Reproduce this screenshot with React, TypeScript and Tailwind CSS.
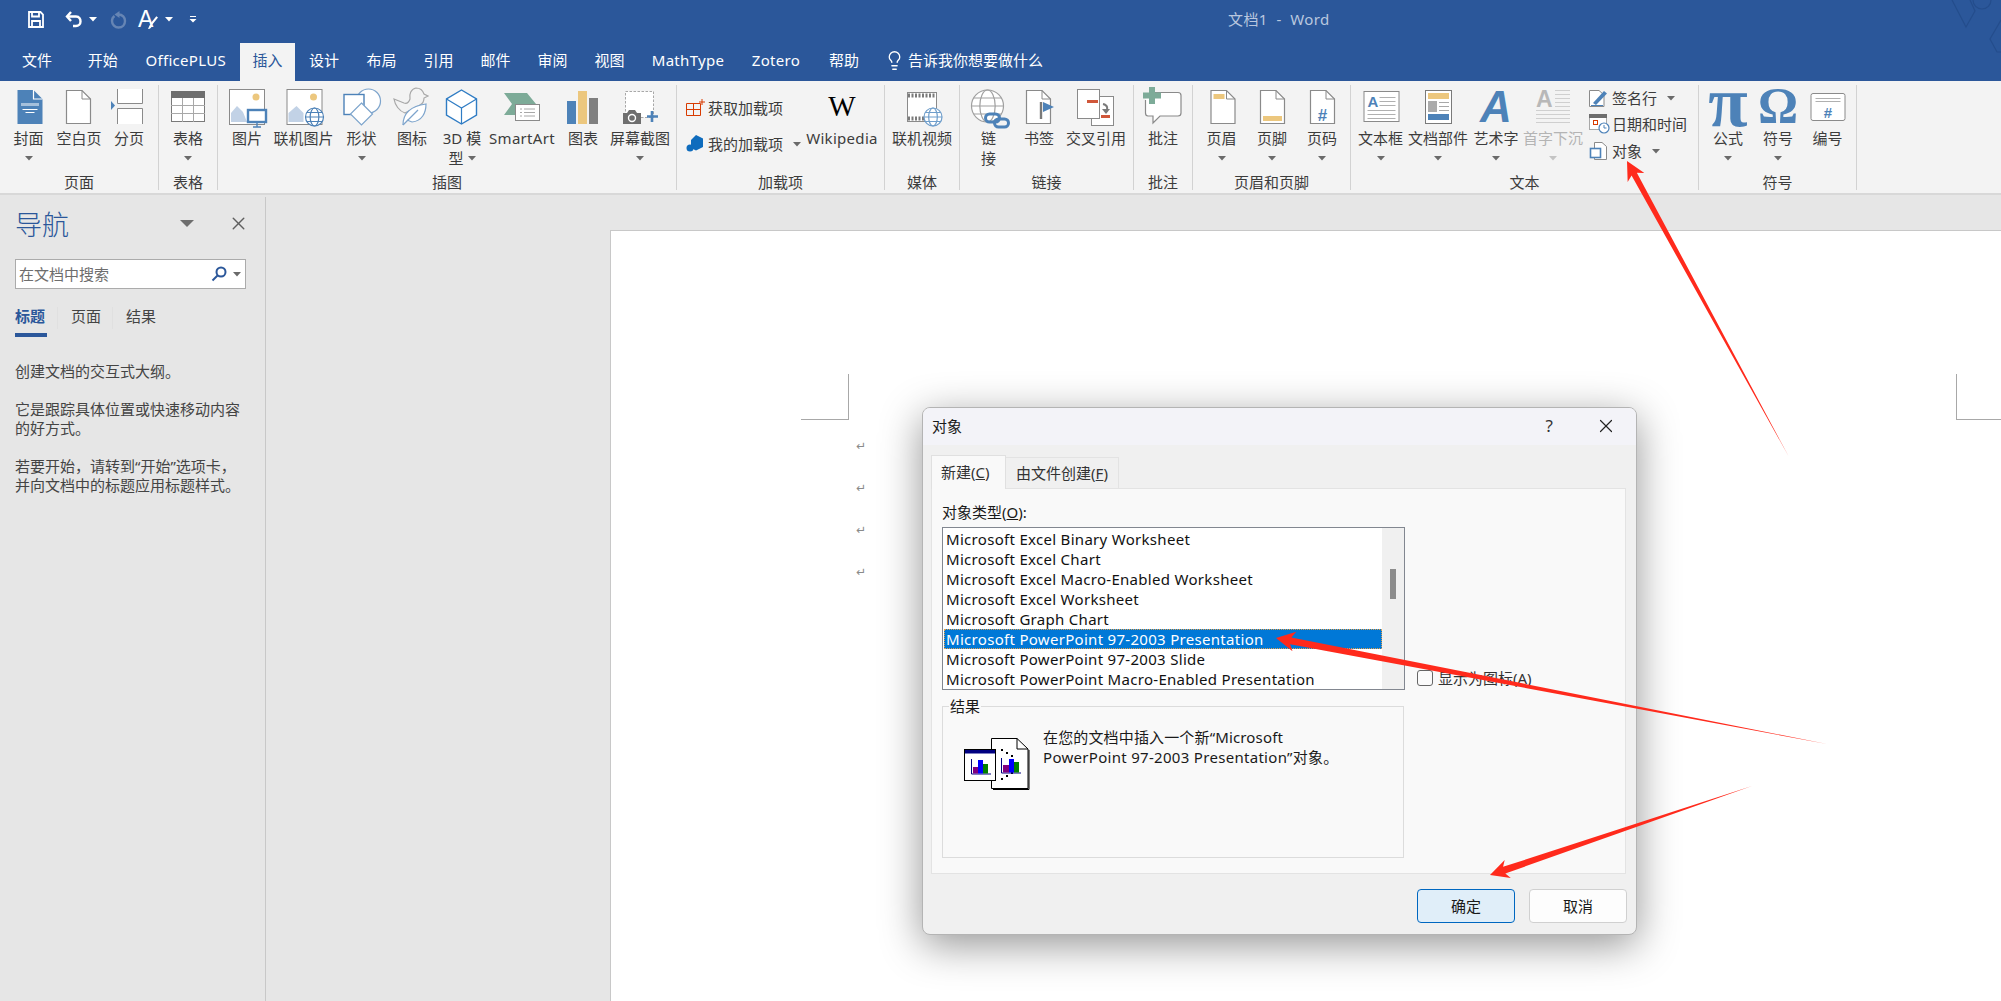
import React from "react";
import { Lightbulb, X } from "lucide-react";

const blue = "#4d82b8";
const gray = "#8a8a8a";
const gold = "#ecc77e";
const green = "#7dab98";
const red = "#d0573a";

const Caret = ({ color = "#6a6a6a" }: { color?: string }) => (
  <svg width="8" height="5" viewBox="0 0 8 5" className="shrink-0">
    <path d="M0 0H8L4 4.5Z" fill={color} />
  </svg>
);

// icon box in page coordinates, so shapes can be drawn where they sit in the ribbon
const Ic = ({ cx, children }: { cx: number; children: React.ReactNode }) => (
  <svg width="40" height="35" viewBox={`${cx - 20} 89 40 35`} className="shrink-0 overflow-visible">
    {children}
  </svg>
);

const Sm = ({ x, y, w, h, children }: { x: number; y: number; w: number; h: number; children: React.ReactNode }) => (
  <svg width={w} height={h} viewBox={`${x} ${y} ${w} ${h}`} className="shrink-0 overflow-visible">
    {children}
  </svg>
);

const Page = ({ x, y = 90, w = 25, h = 34 }: { x: number; y?: number; w?: number; h?: number }) => (
  <>
    <path
      d={`M${x + 0.5} ${y + 0.5}H${x + w - 9}L${x + w - 0.5} ${y + 9}V${y + h - 0.5}H${x + 0.5}Z`}
      fill="#fff"
      stroke={gray}
      strokeWidth="1.2"
    />
    <path d={`M${x + w - 9} ${y + 0.5}V${y + 9}H${x + w - 0.5}`} fill="none" stroke={gray} />
  </>
);

const Globe = ({ cx, cy, r, color }: { cx: number; cy: number; r: number; color: string }) => (
  <g fill="#fff" stroke={color} strokeWidth="1.2">
    <circle cx={cx} cy={cy} r={r} />
    <ellipse cx={cx} cy={cy} rx={r * 0.48} ry={r} fill="none" />
    <path d={`M${cx - r} ${cy}H${cx + r}M${cx - r * 0.85} ${cy - r * 0.5}H${cx + r * 0.85}M${cx - r * 0.85} ${cy + r * 0.5}H${cx + r * 0.85}`} fill="none" />
  </g>
);

const Item = ({
  w,
  icon,
  label,
  line2,
  caret,
  muted,
}: {
  w: number;
  icon: React.ReactNode;
  label: string;
  line2?: string;
  caret?: boolean;
  muted?: boolean;
}) => (
  <div
    className={`flex flex-col items-center shrink-0 pt-[4px] text-[15px] leading-[20px] whitespace-nowrap ${
      muted ? "text-[#b4b4b4]" : "text-[#3c3c3c]"
    }`}
    style={{ width: w }}
  >
    {icon}
    <div className={`mt-[4px] h-[20px] ${/[a-z]/.test(label) ? "tracking-[0.3px]" : ""}`}>{label}</div>
    <div className="h-[20px] flex items-center gap-[4px]">
      {line2 && <span>{line2}</span>}
      {caret && <Caret color={muted ? "#c4c4c4" : "#6a6a6a"} />}
    </div>
  </div>
);

const Group = ({ w, pl = 0, label, children }: { w: number; pl?: number; label: string; children: React.ReactNode }) => (
  <div className="h-[105px] flex flex-col shrink-0 border-r border-[#d2d2d2]" style={{ width: w }}>
    <div className="flex-1 flex" style={{ paddingLeft: pl }}>
      {children}
    </div>
    <div className="h-[14px] leading-[12px] text-center text-[15px] text-[#3c3c3c]">{label}</div>
  </div>
);

const tabs = [
  { t: "文件", w: 74 },
  { t: "开始", w: 57.5 },
  { t: "OfficePLUS", w: 108.5 },
  { t: "插入", w: 55, active: true },
  { t: "设计", w: 58 },
  { t: "布局", w: 57 },
  { t: "引用", w: 57 },
  { t: "邮件", w: 57 },
  { t: "审阅", w: 57 },
  { t: "视图", w: 57 },
  { t: "MathType", w: 100 },
  { t: "Zotero", w: 76 },
  { t: "帮助", w: 60 },
];

const TitleBar = () => (
  <div className="relative bg-[#2b579a] h-[81px] text-white overflow-hidden">
    <div className="h-[43px]">
      <div className="h-[38px] flex items-center">
        <div className="w-[1228px] shrink-0 pl-[28px] flex items-center">
          <svg width="16" height="17" viewBox="0 0 16 17" fill="none" stroke="#fff" strokeWidth="1.8">
            <path d="M1 1H12.5L15 3.5V16H1Z" />
            <path d="M4 1V5.5H11V1" />
            <path d="M4 16V10H12V16" />
          </svg>
          <svg width="18" height="18" viewBox="0 0 18 18" fill="none" stroke="#fff" strokeWidth="2.4" className="ml-[21px]">
            <path d="M6 2L2 6.5L6 11" />
            <path d="M2 6.5H11C14.5 6.5 15.5 9.5 15.5 11.5C15.5 14 13.5 16 11 16H8" />
          </svg>
          <span className="ml-[6px]">
            <Caret color="#fff" />
          </span>
          <svg width="17" height="19" viewBox="0 0 17 19" className="ml-[13px]">
            <path d="M9.500 1L4.500 4.500L9.500 8Z" fill="#6685b4" />
            <path d="M8.500 4.500C12.500 4.500 15 7.500 15 11C15 14.500 12.500 17.500 8.500 17.500C5 17.500 2 14.500 2 11C2 9 3 7 4.500 6" fill="none" stroke="#6685b4" strokeWidth="2.400" />
          </svg>
          <span className="ml-[11px] w-[24px] h-[24px] relative block">
            <span className="block text-[23px] leading-[24px] font-['Liberation_Sans',sans-serif]">A</span>
            <svg width="10" height="14" viewBox="0 0 12 16" className="absolute left-[10px] top-[9px]">
              <path d="M10 0L12 1.5L5 10L3 8.5Z M3 9.5L5 11C4 14 2 15.5 0 15C1 13.500 1.500 11 3 9.500Z" fill="#fff" />
            </svg>
          </span>
          <span className="ml-[3px]">
            <Caret color="#fff" />
          </span>
          <svg width="8" height="8" viewBox="0 0 8 8" className="ml-[16px]">
            <path d="M1 1H7V2H1ZM0.5 4H7.5L4 7.5Z" fill="#fff" />
          </svg>
        </div>
        <span className="text-[15px] text-[#b9c7df] tracking-[0.4px] whitespace-pre">文档1  -  Word</span>
      </div>
    </div>
    <div className="h-[38px] flex">
      {tabs.map((tab) => (
        <div
          key={tab.t}
          className={`shrink-0 text-center text-[15px] leading-[34px] ${
            tab.active ? "bg-[#f3f3f3] text-[#2b579a]" : "text-white"
          } ${/[a-z]/.test(tab.t) ? "tracking-[0.3px]" : ""}`}
          style={{ width: tab.w }}
        >
          {tab.t}
        </div>
      ))}
      <div className="flex items-center pl-[10px] pb-[3px] gap-[3px] text-[15px]">
        <Lightbulb size={21} strokeWidth={1.5} />
        <span>告诉我你想要做什么</span>
      </div>
    </div>
    <svg width="60" height="60" viewBox="1941 0 60 60" className="absolute right-0 top-0" fill="none" stroke="#244d8c" strokeWidth="1.2">
      <path d="M1952 0L1966 27L1975 11L1970 0" />
      <circle cx="1982" cy="0" r="9" />
      <path d="M2001 20L1990 39L1997 52H2001" />
    </svg>
  </div>
);

const Ribbon = () => (
  <div className="bg-[#f3f3f3] h-[114px] pt-[4px] border-b-[2px] border-[#d8d8d8] flex">
    <Group w={159} pl={3} label="页面">
      <Item
        w={51}
        label="封面"
        caret
        icon={
          <Ic cx={28.5}>
            <path d="M17 90H33L42 99V124H17Z" fill={blue} />
            <path d="M33 90V99H42" fill="none" stroke="#fff" strokeWidth="1.2" />
            <path d="M21 104.500H38" stroke="#fff" strokeWidth="3" strokeDasharray="1 1" />
            <path d="M22 109.500H37M25 112.500H34" stroke="#fff" strokeWidth="1" />
          </Ic>
        }
      />
      <Item w={50} label="空白页" icon={<Ic cx={79}><Page x={66} /></Ic>} />
      <Item
        w={50}
        label="分页"
        icon={
          <Ic cx={129}>
            <path d="M117.500 89V103.500H142.500V89" fill="#fff" stroke={gray} />
            <path d="M117.500 124V108.500H142.500V124" fill="#fff" stroke={gray} />
            <path d="M111 101L115 105.500L111 110Z" fill={blue} />
          </Ic>
        }
      />
    </Group>
    <Group w={59} label="表格">
      <Item
        w={58}
        label="表格"
        caret
        icon={
          <Ic cx={188}>
            <rect x="171.500" y="91.500" width="33" height="30" fill="#fff" stroke="#7a7a7a" />
            <rect x="171" y="91" width="34" height="7" fill="#6e6e6e" />
            <path d="M182.500 98V122M193.500 98V122M171 105.500H205M171 113.500H205" stroke="#a8a8a8" />
          </Ic>
        }
      />
    </Group>
    <Group w={459} pl={3} label="插图">
      <Item
        w={52}
        label="图片"
        icon={
          <Ic cx={247}>
            <rect x="229.500" y="89.500" width="35" height="35" fill="#fff" stroke={gray} />
            <circle cx="256" cy="97" r="3.500" fill={gold} />
            <path d="M231 122V113L237 106L243 112L247 122Z" fill="#c2d2e6" />
            <rect x="248" y="110" width="18" height="12" fill="#fff" stroke={blue} strokeWidth="2.400" />
            <path d="M257 123V127M253 127H261" stroke={blue} strokeWidth="1.400" />
          </Ic>
        }
      />
      <Item
        w={61}
        label="联机图片"
        icon={
          <Ic cx={303.5}>
            <rect x="286.500" y="89.500" width="35" height="35" fill="#fff" stroke={gray} />
            <circle cx="313" cy="97" r="3.500" fill={gold} />
            <path d="M288 122V113L296 106L303 113V122Z" fill="#c2d2e6" />
            <Globe cx={314} cy={117} r={9} color={blue} />
          </Ic>
        }
      />
      <Item
        w={55}
        label="形状"
        caret
        icon={
          <Ic cx={361.500}>
            <circle cx="368" cy="101" r="12" fill="#fff" stroke="#7da4cc" strokeWidth="1.200" />
            <rect x="343.500" y="94.500" width="20" height="20" fill="#fff" stroke={blue} strokeWidth="1.400" />
            <path d="M361 103L372 114L361 125L350 114Z" fill="#fff" stroke="#7da4cc" strokeWidth="1.200" />
          </Ic>
        }
      />
      <Item
        w={46}
        label="图标"
        icon={
          <Ic cx={412}>
            <path d="M394 99L404 103C407 104 409 102 410 99C409 94 411 89 416 88C421 88 423 91 424 94L428 96L424 98C424 101 422 104 420 105L405 113C399 111 395 105 394 99Z" fill="none" stroke="#a8a8a8" strokeWidth="1.200" />
            <path d="M403 125C403 112 412 106 426 104C426 113 422 121 412 122L407 120" fill="#fff" stroke="#7da4cc" strokeWidth="1.200" />
            <path d="M403 125L418 110" stroke="#7da4cc" strokeWidth="1.200" />
          </Ic>
        }
      />
      <Item
        w={54}
        label="3D 模"
        line2="型"
        caret
        icon={
          <Ic cx={462}>
            <path d="M461.500 90L476.500 99V115L461.500 124L446.500 115V99Z" fill="#fff" stroke="#2f7cc4" strokeWidth="1.400" />
            <path d="M446.500 99L461.500 108L476.500 99M461.500 108V124" fill="none" stroke="#2f7cc4" strokeWidth="1.200" />
          </Ic>
        }
      />
      <Item
        w={66}
        label="SmartArt"
        icon={
          <Ic cx={522}>
            <path d="M504 93H527L536 104V106L527 115H504L512 104Z" fill={green} />
            <rect x="515.500" y="104.500" width="24" height="16" fill="#fff" stroke={gray} />
            <path d="M520 109H522M524 109H535M520 112.500H522M524 112.500H535M520 116H522M524 116H535" stroke="#a8a8a8" />
          </Ic>
        }
      />
      <Item
        w={56}
        label="图表"
        icon={
          <Ic cx={583}>
            <rect x="567" y="101" width="9" height="23" fill={blue} />
            <rect x="578" y="91" width="9" height="33" fill={gold} />
            <rect x="589" y="98" width="9" height="26" fill="#7f7f7f" />
          </Ic>
        }
      />
      <Item
        w={58}
        label="屏幕截图"
        caret
        icon={
          <Ic cx={640}>
            <rect x="625.500" y="91.500" width="28" height="26" fill="#fff" stroke="#a8a8a8" strokeDasharray="2.500 1.500" />
            <path d="M623 113H627L629 110H635L637 113H641V124H623Z" fill="#6e6e6e" />
            <circle cx="632" cy="118" r="3.500" fill="none" stroke="#fff" strokeWidth="1.400" />
            <path d="M652 111V122M647 116.500H658" stroke={blue} strokeWidth="2.600" />
          </Ic>
        }
      />
    </Group>
    <Group w={208} label="加载项">
      <div className="w-[126px] shrink-0 pl-[9px] pt-[10px] text-[15px] leading-[20px] text-[#3c3c3c] whitespace-nowrap">
        <div className="flex items-center h-[26px]">
          <Sm x={686} y={99} w={22} h={18}>
            <path d="M686.500 103.500H700.500V115.500H686.500ZM686.500 109.500H700.500M693.500 103.500V115.500" fill="none" stroke="#d83b01" />
            <path d="M702 99V105M699 102H705" stroke="#d83b01" />
          </Sm>
          <span>获取加载项</span>
        </div>
        <div className="flex items-center h-[26px] mt-[10px]">
          <Sm x={686} y={136} w={22} h={18}>
            <path d="M696 136L703 139.500V148L696 151.500L691 149V141Z" fill="#0f6cbd" />
            <circle cx="690" cy="149" r="3.500" fill="#0f6cbd" />
          </Sm>
          <span>我的加载项</span>
          <span className="ml-[10px]">
            <Caret />
          </span>
        </div>
      </div>
      <Item
        w={78}
        label="Wikipedia"
        icon={
          <div className="h-[35px] leading-[35px] text-[29px] text-black font-['Liberation_Serif',serif]">W</div>
        }
      />
    </Group>
    <Group w={75} label="媒体">
      <Item
        w={74}
        label="联机视频"
        icon={
          <Ic cx={922}>
            <rect x="907.500" y="92.500" width="29" height="29" fill="#fff" stroke={gray} />
            <path d="M908 95.500H936M908 118.500H930" stroke="#7a7a7a" strokeWidth="4" strokeDasharray="2 1.500" />
            <Globe cx={933} cy={117} r={9} color="#6f9ecb" />
          </Ic>
        }
      />
    </Group>
    <Group w={174} label="链接">
      <Item
        w={57}
        label="链"
        line2="接"
        icon={
          <Ic cx={988.500}>
            <Globe cx={987} cy={106} r={16} color="#a0a0a0" />
            <rect x="985" y="114" width="14" height="8" rx="4" fill="none" stroke={blue} strokeWidth="3" />
            <rect x="994" y="119" width="14" height="8" rx="4" fill="none" stroke={blue} strokeWidth="3" />
          </Ic>
        }
      />
      <Item
        w={44}
        label="书签"
        icon={
          <Ic cx={1039}>
            <Page x={1026} />
            <path d="M1041 102V119" stroke="#7a7a7a" strokeWidth="2.400" />
            <path d="M1043 102L1054 107L1043 112Z" fill={blue} />
          </Ic>
        }
      />
      <Item
        w={70}
        label="交叉引用"
        icon={
          <Ic cx={1096}>
            <rect x="1091.500" y="96.500" width="22" height="29" fill="#fff" stroke={gray} />
            <rect x="1077.500" y="89.500" width="22" height="29" fill="#fff" stroke={gray} />
            <rect x="1087" y="100" width="11" height="3" fill={red} />
            <rect x="1101" y="115" width="9" height="3" fill={red} />
            <path d="M1103 104C1108 105 1108 109 1106 112" fill="none" stroke="#7a7a7a" strokeWidth="2" />
            <path d="M1102 109H1110L1106 114Z" fill="#7a7a7a" />
          </Ic>
        }
      />
    </Group>
    <Group w={59} label="批注">
      <Item
        w={58}
        label="批注"
        icon={
          <Ic cx={1163}>
            <path d="M1149 92.500H1178C1180 92.500 1181 93.500 1181 95.500V113C1181 115 1180 116 1178 116H1160L1153 123V116H1148C1146 116 1145.500 115 1145.500 113V100" fill="#fff" stroke={gray} strokeWidth="1.200" />
            <path d="M1152 87V104M1143 95.500H1161" stroke={green} strokeWidth="6" />
          </Ic>
        }
      />
    </Group>
    <Group w={158} pl={3} label="页眉和页脚">
      <Item
        w={51}
        label="页眉"
        caret
        icon={
          <Ic cx={1221.500}>
            <Page x={1210} />
            <rect x="1213" y="94" width="11" height="5" fill={gold} />
          </Ic>
        }
      />
      <Item
        w={50}
        label="页脚"
        caret
        icon={
          <Ic cx={1272}>
            <Page x={1260} />
            <rect x="1263" y="116" width="19" height="5" fill={gold} />
          </Ic>
        }
      />
      <Item
        w={50}
        label="页码"
        caret
        icon={
          <Ic cx={1322}>
            <Page x={1310} />
            <text x="1322.500" y="121" textAnchor="middle" fontSize="17" fontWeight="700" fill={blue} fontFamily="Liberation Sans">#</text>
          </Ic>
        }
      />
    </Group>
    <Group w={348} pl={1} label="文本">
      <Item
        w={57}
        label="文本框"
        caret
        icon={
          <Ic cx={1380.500}>
            <rect x="1363.500" y="91.500" width="35" height="30" fill="#fff" stroke={gray} />
            <text x="1367" y="107" fontSize="15" fontWeight="700" fill={blue} fontFamily="Liberation Sans">A</text>
            <path d="M1379 97.500H1395M1379 101.500H1395M1379 105.500H1395M1367 110.500H1395M1367 114.500H1395M1367 118.500H1395" stroke="#b0b0b0" />
          </Ic>
        }
      />
      <Item
        w={58}
        label="文档部件"
        caret
        icon={
          <Ic cx={1438}>
            <rect x="1425.500" y="90.500" width="26" height="33" fill="#fff" stroke="#7a7a7a" />
            <rect x="1428" y="93" width="21" height="6" fill={gold} />
            <rect x="1428" y="101" width="9" height="11" fill="#ababab" />
            <path d="M1439 102.500H1449M1439 106.500H1449M1439 110.500H1449" stroke="#a8a8a8" />
            <rect x="1428" y="114" width="21" height="6" fill={blue} />
          </Ic>
        }
      />
      <Item
        w={58}
        label="艺术字"
        caret
        icon={
          <div className="h-[35px] leading-[35px] text-[44px] font-bold italic text-[#4d82b8] font-['Liberation_Sans',sans-serif]">A</div>
        }
      />
      <Item
        w={56}
        label="首字下沉"
        caret
        muted
        icon={
          <Ic cx={1553}>
            <text x="1536" y="107" fontSize="23" fontWeight="700" fill="#b8b8b8" fontFamily="Liberation Sans">A</text>
            <path d="M1555 90.500H1570M1555 94.500H1570M1555 98.500H1570M1555 102.500H1570M1555 106.500H1570M1536 110.500H1570M1536 114.500H1570M1536 118.500H1570M1536 122.500H1570" stroke="#cfcfcf" />
          </Ic>
        }
      />
      <div className="shrink-0 pl-[8px] pt-[1px] text-[15px] leading-[20px] text-[#3c3c3c] whitespace-nowrap">
        <div className="flex items-center h-[24px]">
          <Sm x={1590} y={87} w={23} h={20}>
            <path d="M1590.500 89.500H1600L1605 94V105.500H1590.500Z" fill="#fff" stroke={gray} />
            <path d="M1594 102L1605 90L1608 92.500L1597 104Z" fill={blue} />
            <path d="M1592 104.500H1604" stroke={blue} />
          </Sm>
          <span>签名行</span>
          <span className="ml-[10px]"><Caret /></span>
        </div>
        <div className="flex items-center h-[24px] mt-[2px]">
          <Sm x={1589} y={114} w={23} h={20}>
            <rect x="1589.500" y="114.500" width="17" height="15" fill="#fff" stroke="#a8a8a8" />
            <rect x="1589" y="114" width="18" height="4" fill="#6e6e6e" />
            <rect x="1593.500" y="120.500" width="4" height="4" fill="#fff" stroke="#d83b01" />
            <circle cx="1604" cy="128" r="5" fill="#fff" stroke={blue} strokeWidth="1.200" />
            <path d="M1604 125V128H1606.500" fill="none" stroke={blue} />
          </Sm>
          <span>日期和时间</span>
        </div>
        <div className="flex items-center h-[24px] mt-[3px]">
          <Sm x={1589} y={141} w={23} h={20}>
            <path d="M1594.500 142.500H1602L1606.500 146.500V159.500H1594.500Z" fill="#fff" stroke={gray} />
            <rect x="1590.500" y="148.500" width="10" height="9" fill="#fff" stroke={blue} strokeWidth="1.600" />
          </Sm>
          <span>对象</span>
          <span className="ml-[10px]"><Caret /></span>
        </div>
      </div>
    </Group>
    <Group w={158} pl={3} label="符号">
      <Item
        w={52}
        label="公式"
        caret
        icon={
          <div className="h-[35px] leading-[27px] text-[72px] font-bold text-[#4d82b8] font-['Liberation_Serif',serif]">π</div>
        }
      />
      <Item
        w={48}
        label="符号"
        caret
        icon={
          <div className="h-[35px] leading-[33px] text-[50px] font-bold text-[#4d82b8] font-['Liberation_Serif',serif]">Ω</div>
        }
      />
      <Item
        w={51}
        label="编号"
        icon={
          <Ic cx={1827.500}>
            <rect x="1810.500" y="93.500" width="34" height="27" rx="2" fill="#fff" stroke={gray} />
            <path d="M1815 98.500H1840M1815 101.500H1840" stroke="#b0b0b0" />
            <text x="1827.500" y="118" textAnchor="middle" fontSize="15" fontWeight="700" fill={blue} fontFamily="Liberation Sans">#</text>
          </Ic>
        }
      />
    </Group>
  </div>
);

const NavPane = () => (
  <div className="w-[266px] shrink-0 pt-[2px] text-[15px] leading-[19px] text-[#444]">
    <div className="h-full border-r border-[#c8c8c8] pl-[15px] pr-[15px]">
      <div className="flex items-center h-[54px] pt-[2px]">
        <span className="text-[27px] leading-[36px] text-[#2b579a] font-light">导航</span>
        <svg width="14" height="7" viewBox="0 0 14 7" className="ml-[111px] -mt-[4px]">
          <path d="M0 0H14L7 7Z" fill="#6e6e6e" />
        </svg>
        <X size={21} strokeWidth={1.6} className="ml-[34px] -mt-[4px] text-[#5f5f5f]" />
      </div>
      <div className="mt-[8px] h-[30px] w-[231px] bg-white border border-[#ababab] flex items-center pl-[3px] pr-[4px] text-[#6d6d6d]">
        <span className="flex-1">在文档中搜索</span>
        <svg width="16" height="16" viewBox="0 0 16 16" fill="none" stroke="#2b579a" strokeWidth="2">
          <circle cx="10" cy="6" r="4.500" />
          <path d="M6.500 9.500L1.500 14.500" />
        </svg>
        <span className="ml-[6px]">
          <Caret />
        </span>
      </div>
      <div className="mt-[18px] flex">
        <div className="w-[32px]">
          <div className="font-bold text-[#2b579a] h-[20px]">标题</div>
          <div className="mt-[6px] h-[4px] bg-[#2b579a]" />
        </div>
        <div className="ml-[10px] w-px h-[22px] bg-[#e0e0e0]" />
        <div className="ml-[13px] h-[20px]">页面</div>
        <div className="ml-[11px] w-px h-[22px] bg-[#e0e0e0]" />
        <div className="ml-[13px] h-[20px]">结果</div>
      </div>
      <div className="mt-[25px]">创建文档的交互式大纲。</div>
      <div className="mt-[19px]">
        <div>它是跟踪具体位置或快速移动内容</div>
        <div>的好方式。</div>
      </div>
      <div className="mt-[19px]">
        <div>{"若要开始\uFF0C请转到“开始”选项卡\uFF0C"}</div>
        <div>并向文档中的标题应用标题样式。</div>
      </div>
    </div>
  </div>
);

const DocArea = () => (
  <div className="flex-1 pl-[344px] pt-[35px] flex">
    <div className="flex-1 bg-white border-l border-t border-[#c8c8c8]">
      <div className="flex pt-[143px] pl-[190px]">
        <div className="w-[48px] h-[46px] border-r border-b border-[#a8a8a8]" />
        <div className="ml-auto w-[45px] h-[46px] border-l border-b border-[#a8a8a8]" />
      </div>
      <div className="pl-[245px] pt-[5px] text-[12px] leading-[42px] text-[#8a8a8a] font-['DejaVu_Sans',sans-serif]">
        <div>↵</div>
        <div>↵</div>
        <div>↵</div>
        <div>↵</div>
      </div>
    </div>
  </div>
);

const objectTypes = [
  "Microsoft Excel Binary Worksheet",
  "Microsoft Excel Chart",
  "Microsoft Excel Macro-Enabled Worksheet",
  "Microsoft Excel Worksheet",
  "Microsoft Graph Chart",
  "Microsoft PowerPoint 97-2003 Presentation",
  "Microsoft PowerPoint 97-2003 Slide",
  "Microsoft PowerPoint Macro-Enabled Presentation",
];

const ResultIcon = () => (
  <svg width="66" height="52" viewBox="0 0 66 52" className="shrink-0 mt-[11px]">
    <path d="M27.500 0.500H53L64 11V50.500H27.500Z" fill="#fff" stroke="#000" />
    <path d="M53 0.500V11H64" fill="none" stroke="#000" />
    <path d="M29 51.500H65V12" fill="none" stroke="#000" />
    <path d="M37 12h2M42 15h2M47 18h2M37 41h2M42 38h2M47 35h2" stroke="#000" strokeWidth="2" />
    <rect x="0.500" y="11.500" width="31" height="31" fill="#fff" stroke="#000" />
    <rect x="1" y="12" width="30" height="3.500" fill="#000080" />
    <path d="M7.500 21V36H27M37.500 20V35H57" fill="none" stroke="#000080" />
    <rect x="9" y="29" width="5" height="6.500" fill="#800080" />
    <rect x="14" y="22" width="5" height="13.500" fill="#0000ff" />
    <rect x="19" y="26" width="5" height="9.500" fill="#008000" />
    <rect x="39" y="27" width="6" height="7.500" fill="#800080" />
    <rect x="45" y="21" width="5" height="13.500" fill="#0000ff" />
    <rect x="50" y="24" width="5" height="10.500" fill="#008000" />
  </svg>
);

const ObjectDialog = () => (
  <div className="absolute left-[922px] top-[407px] w-[715px] h-[528px] rounded-[8px] border border-[#b4b4b4] bg-[#f0f0f0] shadow-[0_10px_42px_rgba(0,0,0,0.42)] text-[15px] leading-[20px] text-[#1a1a1a] overflow-hidden">
    <div className="h-[37px] bg-[#f3f3f8] flex items-center pl-[9px] pb-[2px]">
      <span className="flex-1">对象</span>
      <span className="text-[17px] text-[#333] mr-[42px]">?</span>
      <X size={22} strokeWidth={1.3} className="mr-[19px] text-[#222]" />
    </div>
    <div className="h-[43px] pl-[8px] flex items-end">
      <div className="w-[75px] h-[34px] -mb-px relative bg-[#f9f9f9] border-l border-t border-r border-[#e0e0e0] pl-[9px] pb-px flex items-center text-[#333]">
        <span>
          新建(<u>C</u>)
        </span>
      </div>
      <div className="w-[113px] h-[31px] border-t border-r border-[#e3e3e3] flex items-center justify-center text-[#333]">
        <span>
          由文件创建(<u>F</u>)
        </span>
      </div>
    </div>
    <div className="ml-[8px] w-[695px] h-[386px] bg-[#f9f9f9] border border-[#e3e3e3] pl-[10px] pt-[13px]">
      <div className="h-[20px]">
        对象类型(<u>O</u>):
      </div>
      <div className="mt-[5px] flex">
        <div className="w-[463px] h-[163px] border border-[#828790] bg-white flex shrink-0 text-[15px] tracking-[0.3px] text-[#111]">
          <div className="w-[439px] pt-px pl-px shrink-0">
            {objectTypes.map((name, idx) => (
              <div
                key={name}
                className={`h-[20px] pl-[2px] leading-[20px] whitespace-nowrap ${
                  idx === 5 ? "bg-[#0078d7] text-white outline-1 outline-dotted -outline-offset-1 outline-[#e2a04c]" : ""
                }`}
              >
                {name}
              </div>
            ))}
          </div>
          <div className="flex-1 bg-[#f0f0f0] flex justify-center pt-[41px]">
            <div className="w-[6px] h-[30px] bg-[#8c8c8c]" />
          </div>
        </div>
        <div className="ml-[12px] mt-[143px] flex items-center h-[16px] gap-[5px] text-[#333]">
          <div className="w-[16px] h-[16px] rounded-[3px] border border-[#666] bg-[#fbfbfb]" />
          <span>
            显示为图标(<u>A</u>)
          </span>
        </div>
      </div>
      <div className="relative mt-[16px] w-[462px] h-[152px] border border-[#dcdcdc] pl-[21px] pt-[20px] flex">
        <span className="absolute left-[6px] -top-[11px] bg-[#f9f9f9] px-px">结果</span>
        <ResultIcon />
        <div className="ml-[13px] whitespace-nowrap tracking-[0.3px]">
          <div className="tracking-[0.15px]">在您的文档中插入一个新“Microsoft</div>
          <div>PowerPoint 97-2003 Presentation”对象。</div>
        </div>
      </div>
    </div>
    <div className="flex justify-end gap-[14px] pr-[9px] pt-[15px]">
      <div className="w-[98px] h-[34px] rounded-[4px] border border-[#0067c0] bg-[#e0eef9] flex items-center justify-center">确定</div>
      <div className="w-[98px] h-[34px] rounded-[4px] border border-[#d0d0d0] bg-[#fdfdfd] flex items-center justify-center">取消</div>
    </div>
  </div>
);

// tapered arrow: a thin tail growing into the shaft, then a swept head
const arrowPoints = (tx: number, ty: number, hx: number, hy: number, shaft: number, head: number, len: number) => {
  const d = Math.hypot(hx - tx, hy - ty);
  const ux = (hx - tx) / d;
  const uy = (hy - ty) / d;
  const nx = -uy;
  const ny = ux;
  const jx = hx - ux * len;
  const jy = hy - uy * len;
  const bx = hx - ux * len * 1.25;
  const by = hy - uy * len * 1.25;
  return [
    [tx, ty],
    [jx + (nx * shaft) / 2, jy + (ny * shaft) / 2],
    [bx + (nx * head) / 2, by + (ny * head) / 2],
    [hx, hy],
    [bx - (nx * head) / 2, by - (ny * head) / 2],
    [jx - (nx * shaft) / 2, jy - (ny * shaft) / 2],
  ]
    .map((p) => p.join(","))
    .join(" ");
};

const Arrows = () => (
  <svg width="2001" height="1001" viewBox="0 0 2001 1001" className="absolute left-0 top-0 pointer-events-none">
    <polygon points={arrowPoints(1789, 457, 1627, 161, 6, 19, 15)} fill="#ff2a1c" />
    <polygon points={arrowPoints(1827, 744, 1276, 638, 7, 20, 15)} fill="#ff2a1c" />
    <polygon points={arrowPoints(1752, 786, 1490, 875, 7, 19, 15)} fill="#ff2a1c" />
  </svg>
);

export default function App() {
  return (
    <div className="relative w-[2001px] h-[1001px] overflow-hidden flex flex-col bg-[#e6e6e6] font-['Noto_Sans','Noto_Sans_CJK_SC',sans-serif]">
      <TitleBar />
      <Ribbon />
      <div className="flex-1 flex">
        <NavPane />
        <DocArea />
      </div>
      <ObjectDialog />
      <Arrows />
    </div>
  );
}
